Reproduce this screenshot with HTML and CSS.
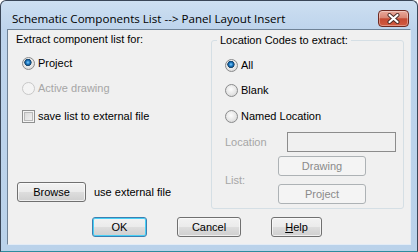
FILE: index.html
```html
<!DOCTYPE html>
<html lang="en">
	<head>
		<meta charset="UTF-8" />
		<title>Schematic Components List --&gt; Panel Layout Insert</title>
		<link rel="stylesheet" href="styles.css">
	</head>
	<body>
		<div class="window">
			<div class="titlebar">
				<span class="title">Schematic Components List --&gt; Panel Layout Insert</span>
				<button class="close-btn" aria-label="Close">
					<svg width="13" height="11" viewBox="0 0 13 11">
						<path d="M2.5 2 L10.5 9 M10.5 2 L2.5 9" stroke="#4a2a26" stroke-width="4" stroke-linecap="round" />
						<path d="M2.5 2 L10.5 9 M10.5 2 L2.5 9" stroke="#fff" stroke-width="2.2" stroke-linecap="round" />
					</svg>
				</button>
			</div>
			<div class="client">
				<div class="top">
					<div class="extract">
						<div class="caption">Extract component list for:</div>
						<div class="option opt-project"><span class="radio checked"></span>Project</div>
						<div class="option opt-active disabled"><span class="radio"></span>Active drawing</div>
						<div class="option opt-save"><span class="checkbox"></span>save list to external file</div>
						<div class="browse-row">
							<button class="btn browse">Browse</button>
							<span>use external file</span>
						</div>
					</div>
					<fieldset class="codes">
						<legend>Location Codes to extract:</legend>
						<div class="option opt-all"><span class="radio checked"></span>All</div>
						<div class="option opt-blank"><span class="radio"></span>Blank</div>
						<div class="option opt-named"><span class="radio"></span>Named Location</div>
						<div class="loc-row">
							<span class="loc-label">Location</span>
							<span class="textbox"></span>
						</div>
						<div class="list-row">
							<span class="list-label">List:</span>
							<div class="list-btns">
								<button class="btn disabled-btn">Drawing</button>
								<button class="btn disabled-btn">Project</button>
							</div>
						</div>
					</fieldset>
				</div>
				<div class="actions">
					<button class="btn default ok">OK</button>
					<button class="btn cancel">Cancel</button>
					<button class="btn help"><u>H</u>elp</button>
				</div>
			</div>
		</div>
	</body>
</html>
```
FILE: styles.css
```css
body {
	margin: 0;
	background: #fff;
	font-family: "Liberation Sans", Arial, sans-serif;
	font-size: 11px;
	color: #000;
}
.window {
	width: 418px;
	height: 252px;
	box-sizing: border-box;
	border: 1px solid #3a4657;
	border-bottom-color: #2e8c9e;
	border-radius: 6px 6px 0 0;
	background: linear-gradient(#cddff1, #bed4ec 28px, #bad2ea);
	display: flex;
	flex-direction: column;
}
.titlebar {
	height: 28px;
	flex: none;
	display: flex;
	align-items: flex-start;
	padding: 0 8px 0 11px;
}
.title {
	font-family: "Open Sans", sans-serif;
	font-size: 11.6px;
	line-height: 16px;
	margin-top: 10px;
}
.close-btn {
	margin: 9px 0 0 auto;
	width: 31px;
	height: 17px;
	padding: 0;
	border: 1px solid #6e2a22;
	border-radius: 4px;
	background: linear-gradient(#eaa99b, #d98775 45%, #c54a33 52%, #d25a40);
	box-shadow: inset 0 0 0 1px rgba(255, 255, 255, 0.35);
	display: flex;
	align-items: center;
	justify-content: center;
}
.close-btn svg {
	display: block;
}
.client {
	flex: 1;
	margin: 0 6px 6px;
	border: 1px solid;
	border-color: #6f8296 #e3ecf6 #e3ecf6 #6f8296;
	background: #f0f0f0;
	padding: 3px 6px 0 0;
	display: flex;
	flex-direction: column;
}
.top {
	display: flex;
}
.extract {
	width: 203px;
	box-sizing: border-box;
	display: flex;
	flex-direction: column;
	padding-bottom: 7px;
}
.caption {
	padding-left: 8px;
	line-height: 13px;
}
.option {
	display: flex;
	align-items: center;
	gap: 3px;
	height: 13px;
	line-height: 13px;
}
.extract .option {
	padding-left: 14px;
}
.opt-project { margin-top: 11px; }
.opt-active { margin-top: 12px; }
.opt-save { margin-top: 15px; }
.disabled {
	color: #a6a6a6;
}
.radio {
	flex: none;
	width: 13px;
	height: 13px;
	box-sizing: border-box;
	border-radius: 50%;
	border: 1px solid #8a8b8c;
	background: radial-gradient(circle at 45% 40%, #fdfdfd, #e6e6e6 55%, #cdcdcd);
}
.radio.checked {
	background:
		radial-gradient(circle at 45% 40%, #7fd0ff 0, #1f7ac4 1.8px, #0e4a7e 3px, #274a66 3.4px, transparent 3.9px),
		radial-gradient(circle at 45% 40%, #fdfdfd, #e6e6e6 55%, #cdcdcd);
}
.disabled .radio {
	border-color: #c8c8c8;
	background: #f4f4f4;
}
.checkbox {
	flex: none;
	width: 13px;
	height: 13px;
	box-sizing: border-box;
	border: 1px solid #8e8f8f;
	background: linear-gradient(135deg, #d5d5d5, #f6f6f6);
	box-shadow: inset 0 0 0 1px #f4f4f4, inset 0 0 0 2px #b9b9b9;
}
.browse-row {
	margin-top: auto;
	padding-left: 9px;
	display: flex;
	align-items: center;
	gap: 8px;
}
.btn {
	font-family: "Liberation Sans", Arial, sans-serif;
	font-size: 11px;
	color: #000;
	height: 20px;
	padding: 0;
	border: 1px solid #707070;
	border-radius: 3px;
	background: linear-gradient(#f2f2f2, #ebebeb 48%, #dddddd 52%, #cfcfcf);
	box-shadow: inset 0 0 0 1px rgba(252, 252, 252, 0.7);
}
.browse {
	width: 69px;
}
.codes {
	margin: 1px 0 0;
	width: 193px;
	min-width: 0;
	box-sizing: border-box;
	padding: 0 6px 4px 13px;
	border: 1px solid #d5dfe5;
	border-radius: 3px;
}
.codes legend {
	margin-left: -8px;
	padding: 0 3px;
	line-height: 13px;
}
.opt-all { margin-top: 12px; }
.opt-blank { margin-top: 12px; }
.opt-named { margin-top: 13px; }
.loc-row {
	display: flex;
	align-items: center;
	margin-top: 9px;
}
.loc-label {
	width: 62px;
	color: #a6a6a6;
}
.textbox {
	width: 109px;
	height: 20px;
	box-sizing: border-box;
	border: 1px solid #8c8c8c;
	background: #f0f0f0;
}
.list-row {
	display: flex;
	align-items: center;
	margin-top: 4px;
}
.list-label {
	width: 53px;
	color: #a6a6a6;
}
.list-btns {
	display: flex;
	flex-direction: column;
	gap: 8px;
}
.disabled-btn {
	width: 88px;
	color: #8a8a8a;
	border-color: #adb2b5;
	background: #f4f4f4;
	box-shadow: none;
}
.actions {
	display: flex;
	justify-content: center;
	gap: 30px;
	margin-top: 8px;
	padding-left: 2px;
}
.ok {
	width: 55px;
}
.default {
	border-color: #3c7fb1;
	box-shadow: inset 0 0 0 1px #48d0f6;
}
.cancel {
	width: 64px;
}
.help {
	width: 51px;
}
```
